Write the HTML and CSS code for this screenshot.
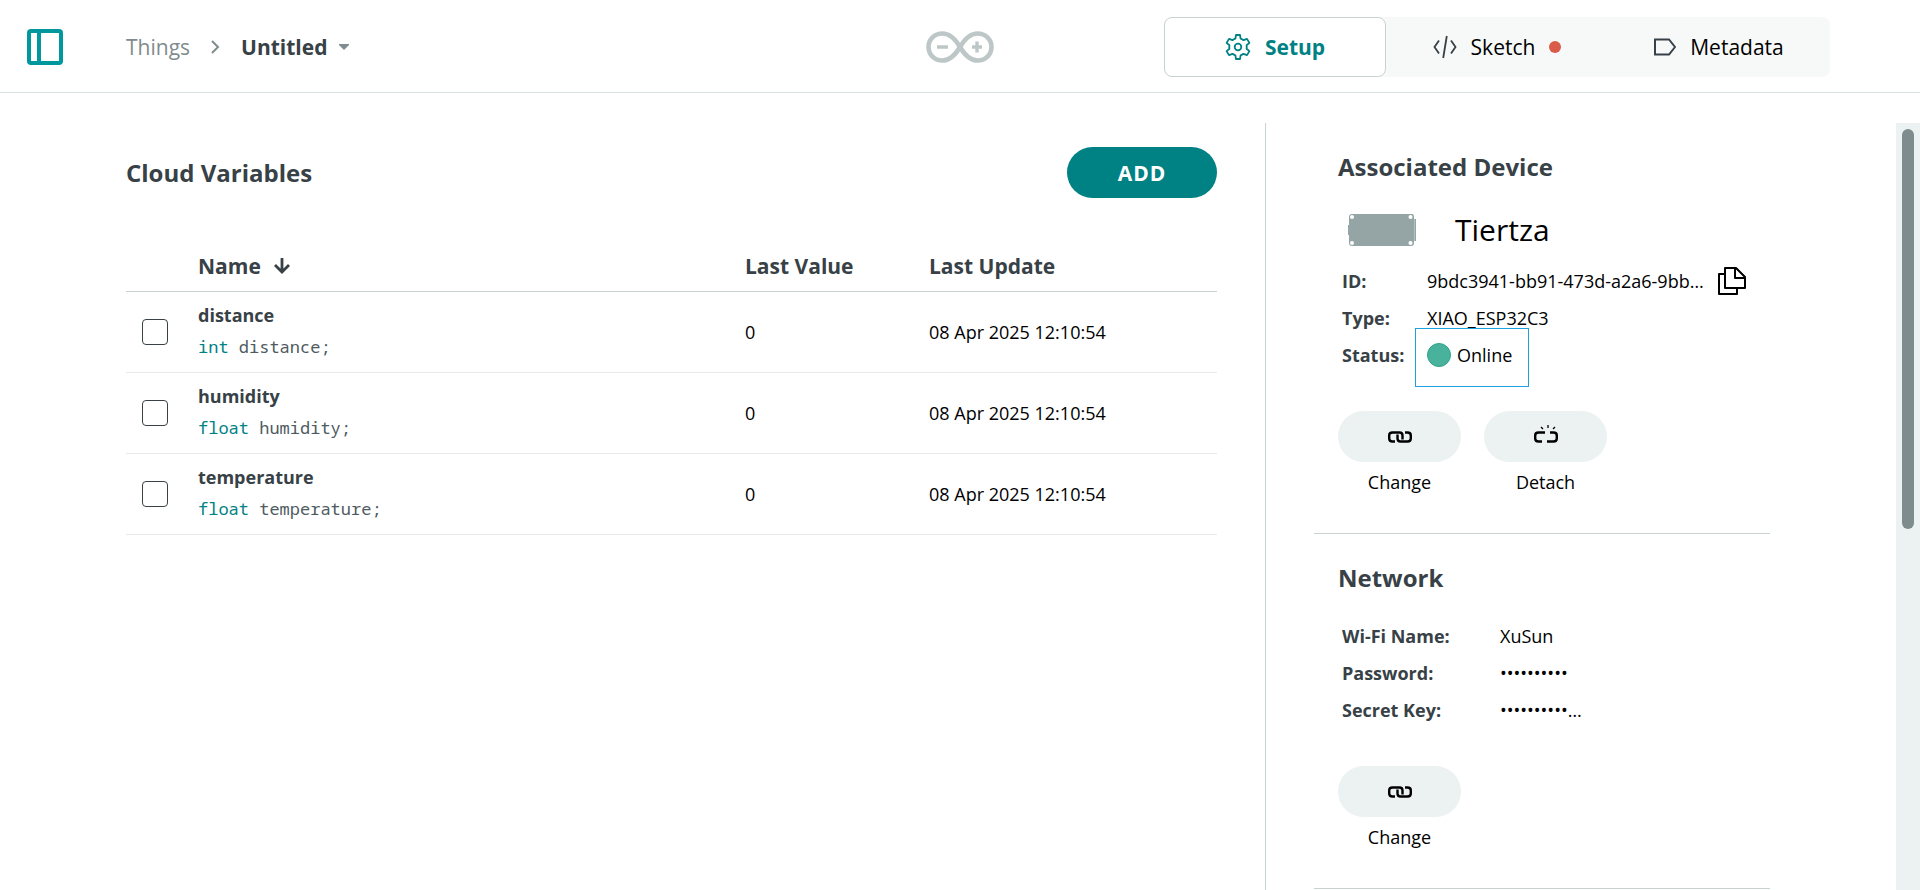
FILE: index.html
```html
<!DOCTYPE html>
<html lang="en">
<head>
<meta charset="utf-8">
<meta name="viewport" content="width=device-width, initial-scale=1">
<title>Untitled - Things</title>
<link rel="stylesheet" href="styles.css">
</head>
<body>
<svg class="defs" aria-hidden="true">
  <symbol id="link" viewBox="0 0 24 12">
    <path d="M7 10.500H4.500Q1.200 10.500 1.200 7.500V4.500Q1.200 1.500 4.500 1.500H11.500Q14.500 1.500 14.500 4.500V8.500M17 1.500H19.500Q22.800 1.500 22.800 4.500V7.500Q22.800 10.500 19.500 10.500H12.500Q9.500 10.500 9.500 7.500V3.500" fill="none" stroke="currentColor" stroke-width="2.400"/>
  </symbol>
</svg>
<header class="topbar">
  <div class="topbar-left">
    <button class="icon-button" type="button" aria-label="Toggle sidebar">
      <svg width="36" height="36" viewBox="0 0 36 36" fill="none" stroke="currentColor" stroke-width="4"><rect x="2" y="2" width="32" height="32" rx="2"/><path d="M12 2V34"/></svg>
    </button>
    <nav class="breadcrumb" aria-label="Breadcrumb">
      <a href="#things">Things</a>
      <svg width="9" height="14" viewBox="0 0 9 14" fill="none" stroke="currentColor" stroke-width="2"><path d="M1 1L7 7L1 13"/></svg>
      <button class="thing-name" type="button">Untitled
        <svg width="10" height="6" viewBox="0 0 10 6" fill="#7f8c8d"><path d="M0 0H10V1L5 6L0 1Z"/></svg>
      </button>
    </nav>
  </div>
  <svg class="logo" width="68" height="32" viewBox="0 0 68 32" fill="none" stroke="currentColor" role="img" aria-label="Arduino">
    <path stroke-width="4.600" d="M34 16C29 7.500 23.500 2.500 16.500 2.500C8.500 2.500 2.500 8.500 2.500 16S8.500 29.500 16.500 29.500C23.500 29.500 29 24.500 34 16C39 7.500 44.500 2.500 51.500 2.500C59.500 2.500 65.500 8.500 65.500 16S59.500 29.500 51.500 29.500C44.500 29.500 39 24.500 34 16Z"/>
    <path stroke-width="3.400" d="M11 16H22M46 16H56M51 10.500V21.500"/>
  </svg>
  <nav class="tabs" aria-label="Views">
    <button class="tab tab-active" type="button">
      <svg width="26" height="26" viewBox="0 0 26 26" fill="none" stroke="currentColor" stroke-width="1.800" stroke-linejoin="round"><path d="M11 1H15L15.600 4.600Q17.200 5.100 18.500 6.200L22 4.900L24.400 8.900L21.600 11.300Q21.900 13 21.600 14.700L24.400 17.100L22 21.100L18.500 19.800Q17.200 20.900 15.600 21.400L15 25H11L10.400 21.400Q8.800 20.900 7.500 19.800L4 21.100L1.600 17.100L4.400 14.700Q4.100 13 4.400 11.300L1.600 8.900L4 4.900L7.500 6.200Q8.800 5.100 10.400 4.600Z"/><circle cx="13" cy="13" r="3.300"/></svg>
      <span>Setup</span>
    </button>
    <button class="tab" type="button">
      <svg width="24" height="24" viewBox="0 -3 24 24" fill="none" stroke="#374146" stroke-width="1.800"><path d="M6 2.500L1.500 9L6 15.500M18 2.500L22.500 9L18 15.500M13.800 -2L10.200 20"/></svg>
      <span>Sketch</span>
      <i class="unsaved"></i>
    </button>
    <button class="tab" type="button">
      <svg width="22" height="18" viewBox="0 0 22 18" fill="none" stroke="#374146" stroke-width="2"><path d="M1 1.500H15L21 9L15 16.500H1Z"/></svg>
      <span>Metadata</span>
    </button>
  </nav>
</header>

<div class="workspace">
  <main class="variables">
    <div class="variables-head">
      <h1 class="title">Cloud Variables</h1>
      <button class="add" type="button">ADD</button>
    </div>
    <table class="table">
      <thead>
        <tr>
          <th class="col-check"></th>
          <th class="col-name"><button class="sort" type="button">Name
            <svg width="18" height="16" viewBox="0 0 18 16" fill="none" stroke="currentColor" stroke-width="2.800"><path d="M9 0V14M2 7L9 14L16 7"/></svg></button></th>
          <th class="col-value">Last Value</th>
          <th>Last Update</th>
        </tr>
      </thead>
      <tbody>
        <tr>
          <td><input class="check" type="checkbox" aria-label="Select distance"></td>
          <td><div class="var-name">distance</div><code class="decl"><b>int</b> distance;</code></td>
          <td>0</td><td>08 Apr 2025 12:10:54</td>
        </tr>
        <tr>
          <td><input class="check" type="checkbox" aria-label="Select humidity"></td>
          <td><div class="var-name">humidity</div><code class="decl"><b>float</b> humidity;</code></td>
          <td>0</td><td>08 Apr 2025 12:10:54</td>
        </tr>
        <tr>
          <td><input class="check" type="checkbox" aria-label="Select temperature"></td>
          <td><div class="var-name">temperature</div><code class="decl"><b>float</b> temperature;</code></td>
          <td>0</td><td>08 Apr 2025 12:10:54</td>
        </tr>
      </tbody>
    </table>
  </main>

  <aside class="side">
    <div class="side-content">
      <section class="panel">
        <h2 class="title">Associated Device</h2>
        <div class="device">
          <svg width="68" height="32" viewBox="0 0 68 32"><path fill="#95a5a6" d="M0 11H1V3Q1 0 4 0H64Q66 0 66 3V5H68V27H66V29Q66 32 63 32H4Q1 32 1 29V21H0Z"/><path stroke="#b5c0c0" d="M66.500 5V27"/><g fill="#fff"><circle cx="4" cy="3" r="2"/><circle cx="62.500" cy="3" r="2"/><circle cx="4" cy="29" r="2"/><circle cx="62.500" cy="29" r="2"/></g></svg>
          <span>Tiertza</span>
        </div>
        <dl class="facts">
          <dt>ID:</dt>
          <dd>9bdc3941-bb91-473d-a2a6-9bb…
            <button class="icon-button copy" type="button" aria-label="Copy ID">
              <svg width="28" height="28" viewBox="0 0 28 28" fill="none" stroke="currentColor" stroke-width="2" stroke-linejoin="round"><path d="M7 1H18L27 10V21H7Z"/><path d="M17 1V11H27M7 7H1V27H19V21"/></svg>
            </button>
          </dd>
          <dt>Type:</dt><dd>XIAO_ESP32C3</dd>
          <dt>Status:</dt><dd><span class="status"><i class="status-dot"></i>Online</span></dd>
        </dl>
        <div class="actions">
          <button class="action" type="button"><span class="pill"><svg width="24" height="12"><use href="#link"/></svg></span>Change</button>
          <button class="action" type="button"><span class="pill"><svg width="24" height="26" viewBox="0 0 24 26" fill="none" stroke="currentColor"><path stroke-width="2.400" d="M11 8.500H4.500Q1.200 8.500 1.200 11.500V14.500Q1.200 17.500 4.500 17.500H8M16 8.500H19.500Q22.800 8.500 22.800 11.500V14.500Q22.800 17.500 19.500 17.500H13"/><path stroke-width="1.300" d="M14 1V4M7 3L9 5M21 3L19 5"/></svg></span>Detach</button>
        </div>
      </section>
      <section class="panel">
        <h2 class="title">Network</h2>
        <dl class="facts facts-wide">
          <dt>Wi-Fi Name:</dt><dd>XuSun</dd>
          <dt>Password:</dt><dd>••••••••••</dd>
          <dt>Secret Key:</dt><dd>••••••••••…</dd>
        </dl>
        <div class="actions">
          <button class="action" type="button"><span class="pill"><svg width="24" height="12"><use href="#link"/></svg></span>Change</button>
        </div>
      </section>
    </div>
    <div class="scroll-track"><div class="scroll-thumb"></div></div>
  </aside>
</div>
</body>
</html>
```

FILE: styles.css
```css
* { box-sizing: border-box; }

body {
  margin: 0;
  height: 100vh;
  display: flex;
  flex-direction: column;
  overflow: hidden;
  background: #fff;
  color: #000;
  font: 18px/26px "Open Sans", "Noto Sans", sans-serif;
}

button {
  margin: 0;
  padding: 0;
  border: 0;
  background: none;
  color: inherit;
  font: inherit;
  cursor: pointer;
}

svg { flex: none; display: block; }
.defs { position: absolute; width: 0; height: 0; }

.topbar {
  flex: none;
  display: grid;
  grid-template-columns: 1fr auto 1fr;
  align-items: center;
  padding: 17px 90px 15px 27px;
  border-bottom: 1px solid #dae3e3;
  font-size: 21px;
  line-height: 28px;
}
.topbar-left { display: flex; align-items: center; gap: 63px; }
.icon-button { display: flex; color: #00979d; }
.breadcrumb { display: flex; align-items: center; gap: 21px; color: #7f8c8d; }
.breadcrumb a { color: inherit; text-decoration: none; }
.thing-name { display: flex; align-items: center; gap: 12px; color: #374146; font-weight: 700; }
.logo { color: #bdc7c7; margin-left: 63px; }

.tabs {
  justify-self: end;
  display: grid;
  grid-template-columns: repeat(3, 222px);
  height: 60px;
  border-radius: 8px;
  background: #f7f9f9;
}
.tab { display: flex; align-items: center; justify-content: center; gap: 14px; border-radius: 8px; }
.tab-active { border: 1px solid #c9d2d2; background: #fff; color: #008184; font-weight: 700; }
.unsaved { width: 12px; height: 12px; border-radius: 50%; background: #da5b4a; }

.workspace {
  flex: 1;
  min-height: 0;
  display: grid;
  grid-template-columns: minmax(0, 1fr) 655px;
  padding-top: 30px;
}

.variables { padding: 24px 48px 0 126px; }
.variables-head { display: flex; align-items: center; justify-content: space-between; }
.title { margin: 0; color: #374146; font-size: 24px; line-height: 32px; font-weight: 700; }
.add {
  width: 150px;
  height: 51px;
  border-radius: 26px;
  background: #008184;
  color: #fff;
  font-size: 21px;
  line-height: 28px;
  font-weight: 700;
  letter-spacing: 1px;
}

.table { width: 100%; margin-top: 53px; border-collapse: collapse; table-layout: fixed; }
.table th {
  padding: 0 0 10px;
  border-bottom: 1px solid #c9d2d2;
  color: #374146;
  font-size: 21px;
  line-height: 30px;
  text-align: left;
}
.table td { height: 81px; padding: 0; border-bottom: 1px solid #e6eaea; }
.table tbody td:nth-child(2) { padding-bottom: 2px; }
.col-check { width: 72px; }
.col-name { width: 547px; }
.col-value { width: 184px; }
.sort { display: flex; align-items: center; gap: 12px; font-weight: 700; }
.check {
  appearance: none;
  display: block;
  width: 26px;
  height: 26px;
  margin: 0 0 0 16px;
  border: 1px solid #374146;
  border-radius: 4px;
}
.var-name { margin-bottom: 6px; color: #374146; font-weight: 700; }
.decl { display: block; color: #4e5b61; font: 17px/26px "Noto Sans Mono", "DejaVu Sans Mono", monospace; }
.decl b { color: #008184; font-weight: 400; }

.side { display: flex; min-height: 0; border-left: 1px solid #c9d2d2; overflow: hidden; }
.side-content { flex: 1; min-width: 0; padding: 0 126px 0 48px; }
.panel { padding: 28px 24px 37px; border-bottom: 1px solid #c9d2d2; }
.device {
  display: flex;
  align-items: center;
  gap: 39px;
  height: 40px;
  margin-top: 27px;
  padding-left: 10px;
  font-size: 30px;
  line-height: 40px;
}
.facts {
  display: grid;
  grid-template-columns: 85px 1fr;
  grid-auto-rows: 37px;
  align-items: center;
  margin: 12px -24px 0 4px;
}
.facts-wide { grid-template-columns: 158px 1fr; margin-top: 23px; }
.facts dt { color: #374146; font-weight: 700; }
.facts dd { display: flex; align-items: center; gap: 14px; margin: 0; white-space: nowrap; }
.copy { color: #000; }
.status { position: relative; display: flex; align-items: center; gap: 6px; }
.status::before {
  content: "";
  position: absolute;
  inset: -14px -17px -19px -12px;
  border: 1px solid #1ba1e2;
}
.status-dot { width: 24px; height: 24px; border: 1px solid #2fa38a; border-radius: 50%; background: #49b29d; }

.actions { display: flex; gap: 23px; margin-top: 38px; }
.action { display: flex; flex-direction: column; align-items: center; gap: 7px; }
.panel .action { padding-bottom: 1px; }
.pill {
  display: flex;
  align-items: center;
  justify-content: center;
  width: 123px;
  height: 51px;
  border-radius: 26px;
  background: #ecf1f1;
}

.scroll-track { flex: none; width: 24px; padding: 6px; background: #ecf1f1; }
.scroll-thumb { height: 53%; border-radius: 6px; background: #7f8c8d; }
```
